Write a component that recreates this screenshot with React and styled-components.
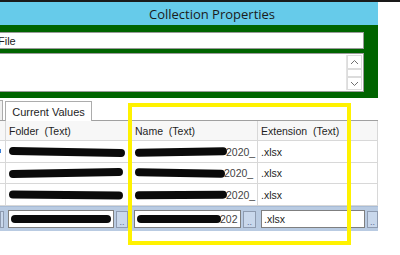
import React from "react";
import styled, { createGlobalStyle } from "styled-components";

const GlobalStyle = createGlobalStyle`
  html, body {
    margin: 0;
    padding: 0;
    background: #ffffff;
  }
  body {
    width: 400px;
    height: 255px;
    overflow: hidden;
    font-family: "Liberation Sans", Arial, sans-serif;
  }
`;

const Page = styled.div`
  position: relative;
  width: 400px;
  height: 255px;
  overflow: hidden;
  background: #ffffff;
`;

const TopLine = styled.div`
  height: 2px;
  background: #1a1a1a;
`;

const Panel = styled.div`
  width: 378px;
`;

const TitleBar = styled.div`
  height: 23px;
  background: #66cbea;
  display: flex;
  align-items: center;
  justify-content: center;
  padding-left: 46px;
  box-sizing: border-box;
  font-family: "Open Sans", "Noto Sans", sans-serif;
  font-size: 13px;
  color: #1b1b1b;
`;

const GreenArea = styled.div`
  height: 73px;
  background: #006400;
  box-sizing: border-box;
  padding: 7px 14px 0 0;
  display: flex;
  flex-direction: column;
  gap: 4px;
`;

const FieldInput = styled.div`
  height: 17px;
  box-sizing: border-box;
  background: #ffffff;
  border: 1px solid #9a9a9a;
  border-left: none;
  display: flex;
  align-items: center;
  font-size: 11px;
  color: #222;
  text-indent: -2px;
`;

const TextArea = styled.div`
  height: 39px;
  box-sizing: border-box;
  background: #ffffff;
  border: 1px solid #9a9a9a;
  border-left: none;
  display: flex;
  justify-content: flex-end;
  padding: 1px;
`;

const ScrollBar = styled.div`
  width: 15px;
  display: flex;
  flex-direction: column;
  border-left: 1px solid #e2e2e2;
`;

const ScrollBtn = styled.div`
  height: ${(p) => p.h}px;
  box-sizing: border-box;
  border: 1px solid #dcdcdc;
  background: #ffffff;
  display: flex;
  align-items: center;
  justify-content: center;
`;

const TabStrip = styled.div`
  height: 23px;
  display: flex;
  align-items: flex-end;
  border-bottom: 1px solid #a0a0a0;
  box-sizing: border-box;
`;

const TabEdge = styled.div`
  width: 3px;
  height: 20px;
  box-sizing: border-box;
  border: 1px solid #acacac;
  border-left: none;
  border-bottom: none;
  background: #f0f0f0;
  margin-right: 2px;
`;

const Tab = styled.div`
  width: 87px;
  height: 20px;
  box-sizing: border-box;
  border: 1px solid #acacac;
  border-bottom: none;
  background: #ffffff;
  display: flex;
  align-items: center;
  justify-content: center;
  font-size: 11px;
  color: #1e1e1e;
  margin-bottom: -1px;
`;

const Grid = styled.div`
  display: grid;
  grid-template-columns: 6px 126px 126px 120px;
  grid-template-rows: 20px 22px 21px 22px 25px;
`;

const Cell = styled.div`
  box-sizing: border-box;
  border-right: 1px solid #d8d8d8;
  border-bottom: 1px solid #d8d8d8;
  background: ${(p) => (p.header ? "#f7f7f7" : "#ffffff")};
  display: flex;
  align-items: center;
  padding-left: 3px;
  font-size: 10.5px;
  color: #1e1e1e;
  white-space: nowrap;
  overflow: hidden;
`;

const RowHead = styled.div`
  box-sizing: border-box;
  border-right: 1px solid #d8d8d8;
  border-bottom: 1px solid #d8d8d8;
  background: ${(p) => (p.header ? "#f7f7f7" : "#ffffff")};
  position: relative;
`;

const Marker = styled.span`
  position: absolute;
  left: 0;
  top: 8px;
  width: 1px;
  height: 4px;
  background: #3b7fd6;
`;

const EditCell = styled.div`
  box-sizing: border-box;
  background: #b9cbe2;
  border-top: 1px solid #a8bcd6;
  display: flex;
  align-items: center;
  gap: 2px;
  padding-left: ${(p) => p.pl}px;
`;

const EditInput = styled.div`
  width: ${(p) => p.w}px;
  height: 18px;
  box-sizing: border-box;
  background: #ffffff;
  border: 1px solid #7f7f7f;
  display: flex;
  align-items: center;
  padding-left: 2px;
  font-size: 10.5px;
  color: #1e1e1e;
  overflow: hidden;
  white-space: nowrap;
`;

const DotsButton = styled.div`
  width: ${(p) => p.w || 12}px;
  height: 17px;
  box-sizing: border-box;
  background: #c9d8ec;
  border: 1px solid #8e9bb0;
  display: flex;
  align-items: flex-end;
  justify-content: center;
  font-size: 9px;
  line-height: 10px;
  color: #5a6a90;
`;

const Scribble = styled.span`
  display: inline-block;
  width: ${(p) => p.w}px;
  height: ${(p) => p.h || 6}px;
  background: #0a0a0a;
  border-radius: 5px;
  transform: rotate(${(p) => p.r || 0}deg);
  flex-shrink: 0;
`;

const Faint = styled.span`
  color: #444;
  margin-left: -1px;
`;

const Highlight = styled.div`
  position: absolute;
  left: 128px;
  top: 103px;
  width: 223px;
  height: 142px;
  box-sizing: border-box;
  border: 4px solid #fff200;
  pointer-events: none;
`;

const Chevron = ({ up }) => (
  <svg width="9" height="6" viewBox="0 0 9 6">
    <path
      d={up ? "M1 5 L4.5 1.5 L8 5" : "M1 1 L4.5 4.5 L8 1"}
      fill="none"
      stroke="#707070"
      strokeWidth="1"
    />
  </svg>
);

const rows = [
  { folder: 116, name: 92, r: 1 },
  { folder: 114, name: 90, r: -1 },
  { folder: 114, name: 92, r: 0.5 },
];

export default function App() {
  return (
    <Page>
      <GlobalStyle />
      <TopLine />
      <Panel>
        <TitleBar>Collection Properties</TitleBar>
        <GreenArea>
          <FieldInput>File</FieldInput>
          <TextArea>
            <ScrollBar>
              <ScrollBtn h={14}>
                <Chevron up />
              </ScrollBtn>
              <ScrollBtn h={9} />
              <ScrollBtn h={13}>
                <Chevron />
              </ScrollBtn>
            </ScrollBar>
          </TextArea>
        </GreenArea>
        <TabStrip>
          <TabEdge />
          <Tab>Current Values</Tab>
        </TabStrip>
        <Grid>
          <RowHead header />
          <Cell header>Folder&nbsp; (Text)</Cell>
          <Cell header>Name&nbsp; (Text)</Cell>
          <Cell header>Extension&nbsp; (Text)</Cell>
          {rows.map((row, i) => (
            <React.Fragment key={i}>
              <RowHead>{i === 0 && <Marker />}</RowHead>
              <Cell>
                <Scribble w={row.folder} h={8} r={row.r} />
              </Cell>
              <Cell>
                <Scribble w={row.name} h={8} r={-row.r} />
                <Faint>2020_</Faint>
              </Cell>
              <Cell>.xlsx</Cell>
            </React.Fragment>
          ))}
          <EditCell pl={0}>
            <DotsButton w={4} />
          </EditCell>
          <EditCell pl={2}>
            <EditInput w={106}>
              <Scribble w={100} h={8} />
            </EditInput>
            <DotsButton>..</DotsButton>
          </EditCell>
          <EditCell pl={2}>
            <EditInput w={107}>
              <Scribble w={84} h={8} />
              <Faint>202</Faint>
            </EditInput>
            <DotsButton w={13}>..</DotsButton>
          </EditCell>
          <EditCell pl={3}>
            <EditInput w={106}>.xlsx</EditInput>
            <DotsButton w={11}>..</DotsButton>
          </EditCell>
        </Grid>
      </Panel>
      <Highlight />
    </Page>
  );
}
